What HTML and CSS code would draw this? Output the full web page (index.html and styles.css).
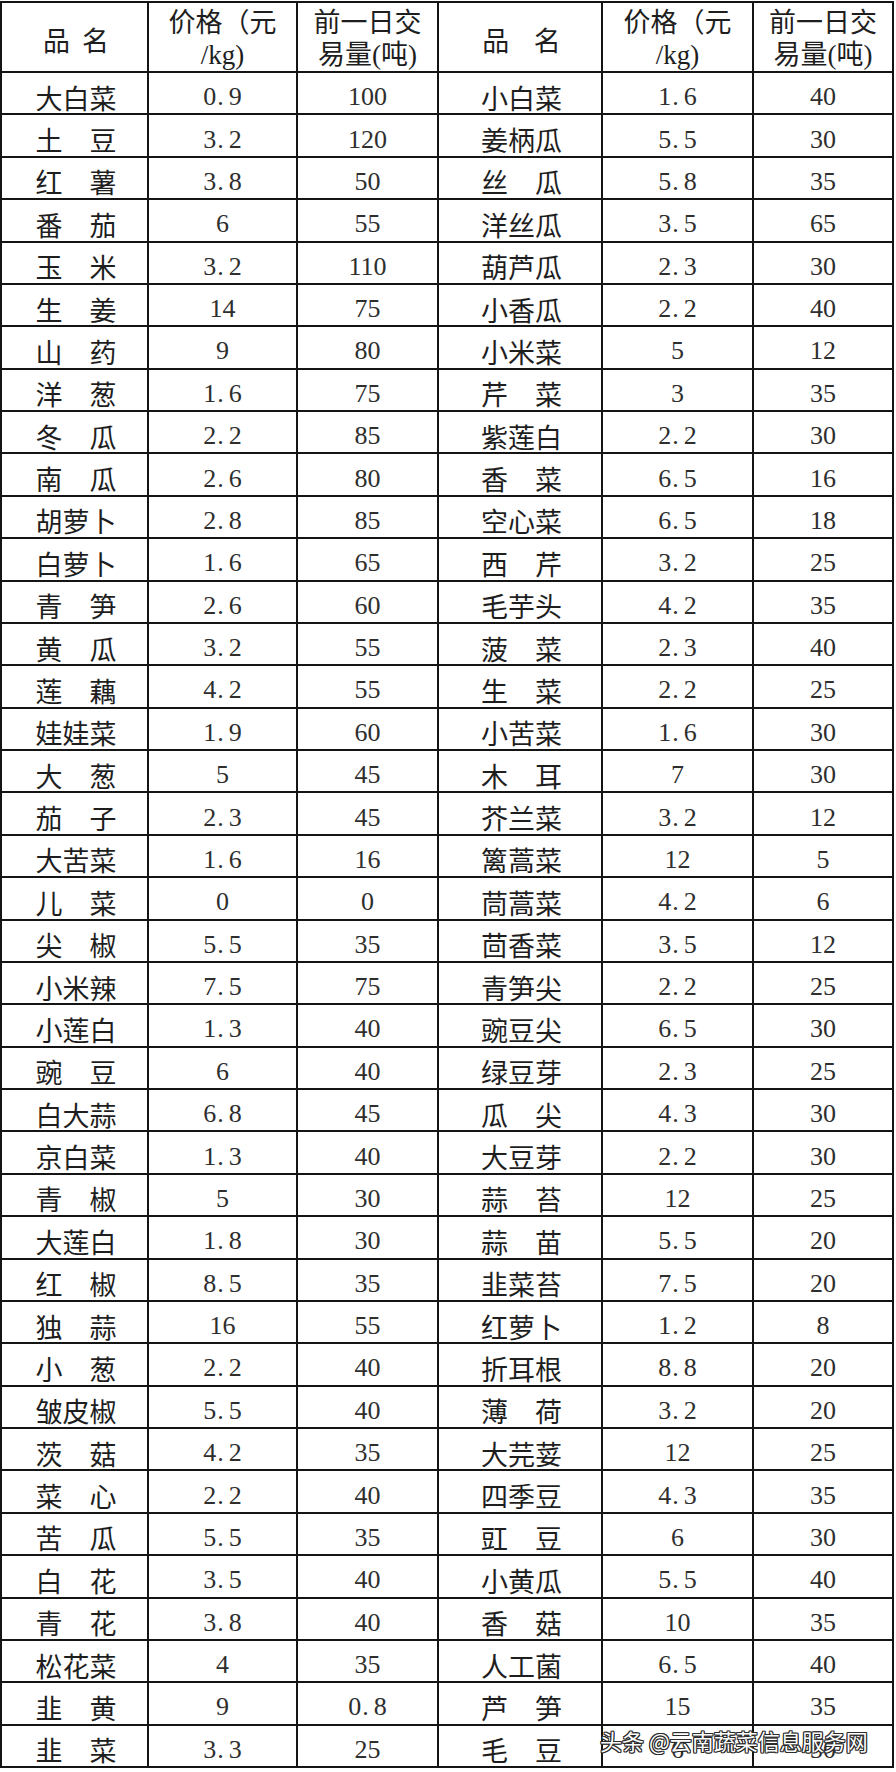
FILE: index.html
```html
<!DOCTYPE html>
<html lang="zh-CN">
<head>
<meta charset="utf-8">
<title>蔬菜价格表</title>
<link rel="stylesheet" href="styles.css">
</head>
<body>
<div class="sheet">
<table class="prices">
<colgroup>
<col class="c1"><col class="c2"><col class="c3"><col class="c4"><col class="c5"><col class="c6">
</colgroup>
<thead>
<tr>
<th class="name"><span class="jl">品名</span></th>
<th class="two">价格（元<br>/kg)</th>
<th class="two">前一日交<br>易量(吨)</th>
<th class="name"><span class="jr">品名</span></th>
<th class="two">价格（元<br>/kg)</th>
<th class="two">前一日交<br>易量(吨)</th>
</tr>
</thead>
<tbody>
<tr><td class="name">大白菜</td><td class="num">0<i class="pt">.</i>9</td><td class="num">100</td><td class="name">小白菜</td><td class="num">1<i class="pt">.</i>6</td><td class="num">40</td></tr>
<tr><td class="name"><span class="j">土豆</span></td><td class="num">3<i class="pt">.</i>2</td><td class="num">120</td><td class="name">姜柄瓜</td><td class="num">5<i class="pt">.</i>5</td><td class="num">30</td></tr>
<tr><td class="name"><span class="j">红薯</span></td><td class="num">3<i class="pt">.</i>8</td><td class="num">50</td><td class="name"><span class="j">丝瓜</span></td><td class="num">5<i class="pt">.</i>8</td><td class="num">35</td></tr>
<tr><td class="name"><span class="j">番茄</span></td><td class="num">6</td><td class="num">55</td><td class="name">洋丝瓜</td><td class="num">3<i class="pt">.</i>5</td><td class="num">65</td></tr>
<tr><td class="name"><span class="j">玉米</span></td><td class="num">3<i class="pt">.</i>2</td><td class="num">110</td><td class="name">葫芦瓜</td><td class="num">2<i class="pt">.</i>3</td><td class="num">30</td></tr>
<tr><td class="name"><span class="j">生姜</span></td><td class="num">14</td><td class="num">75</td><td class="name">小香瓜</td><td class="num">2<i class="pt">.</i>2</td><td class="num">40</td></tr>
<tr><td class="name"><span class="j">山药</span></td><td class="num">9</td><td class="num">80</td><td class="name">小米菜</td><td class="num">5</td><td class="num">12</td></tr>
<tr><td class="name"><span class="j">洋葱</span></td><td class="num">1<i class="pt">.</i>6</td><td class="num">75</td><td class="name"><span class="j">芹菜</span></td><td class="num">3</td><td class="num">35</td></tr>
<tr><td class="name"><span class="j">冬瓜</span></td><td class="num">2<i class="pt">.</i>2</td><td class="num">85</td><td class="name">紫莲白</td><td class="num">2<i class="pt">.</i>2</td><td class="num">30</td></tr>
<tr><td class="name"><span class="j">南瓜</span></td><td class="num">2<i class="pt">.</i>6</td><td class="num">80</td><td class="name"><span class="j">香菜</span></td><td class="num">6<i class="pt">.</i>5</td><td class="num">16</td></tr>
<tr><td class="name">胡萝卜</td><td class="num">2<i class="pt">.</i>8</td><td class="num">85</td><td class="name">空心菜</td><td class="num">6<i class="pt">.</i>5</td><td class="num">18</td></tr>
<tr><td class="name">白萝卜</td><td class="num">1<i class="pt">.</i>6</td><td class="num">65</td><td class="name"><span class="j">西芹</span></td><td class="num">3<i class="pt">.</i>2</td><td class="num">25</td></tr>
<tr><td class="name"><span class="j">青笋</span></td><td class="num">2<i class="pt">.</i>6</td><td class="num">60</td><td class="name">毛芋头</td><td class="num">4<i class="pt">.</i>2</td><td class="num">35</td></tr>
<tr><td class="name"><span class="j">黄瓜</span></td><td class="num">3<i class="pt">.</i>2</td><td class="num">55</td><td class="name"><span class="j">菠菜</span></td><td class="num">2<i class="pt">.</i>3</td><td class="num">40</td></tr>
<tr><td class="name"><span class="j">莲藕</span></td><td class="num">4<i class="pt">.</i>2</td><td class="num">55</td><td class="name"><span class="j">生菜</span></td><td class="num">2<i class="pt">.</i>2</td><td class="num">25</td></tr>
<tr><td class="name">娃娃菜</td><td class="num">1<i class="pt">.</i>9</td><td class="num">60</td><td class="name">小苦菜</td><td class="num">1<i class="pt">.</i>6</td><td class="num">30</td></tr>
<tr><td class="name"><span class="j">大葱</span></td><td class="num">5</td><td class="num">45</td><td class="name"><span class="j">木耳</span></td><td class="num">7</td><td class="num">30</td></tr>
<tr><td class="name"><span class="j">茄子</span></td><td class="num">2<i class="pt">.</i>3</td><td class="num">45</td><td class="name">芥兰菜</td><td class="num">3<i class="pt">.</i>2</td><td class="num">12</td></tr>
<tr><td class="name">大苦菜</td><td class="num">1<i class="pt">.</i>6</td><td class="num">16</td><td class="name">篱蒿菜</td><td class="num">12</td><td class="num">5</td></tr>
<tr><td class="name"><span class="j">儿菜</span></td><td class="num">0</td><td class="num">0</td><td class="name">茼蒿菜</td><td class="num">4<i class="pt">.</i>2</td><td class="num">6</td></tr>
<tr><td class="name"><span class="j">尖椒</span></td><td class="num">5<i class="pt">.</i>5</td><td class="num">35</td><td class="name">茴香菜</td><td class="num">3<i class="pt">.</i>5</td><td class="num">12</td></tr>
<tr><td class="name">小米辣</td><td class="num">7<i class="pt">.</i>5</td><td class="num">75</td><td class="name">青笋尖</td><td class="num">2<i class="pt">.</i>2</td><td class="num">25</td></tr>
<tr><td class="name">小莲白</td><td class="num">1<i class="pt">.</i>3</td><td class="num">40</td><td class="name">豌豆尖</td><td class="num">6<i class="pt">.</i>5</td><td class="num">30</td></tr>
<tr><td class="name"><span class="j">豌豆</span></td><td class="num">6</td><td class="num">40</td><td class="name">绿豆芽</td><td class="num">2<i class="pt">.</i>3</td><td class="num">25</td></tr>
<tr><td class="name">白大蒜</td><td class="num">6<i class="pt">.</i>8</td><td class="num">45</td><td class="name"><span class="j">瓜尖</span></td><td class="num">4<i class="pt">.</i>3</td><td class="num">30</td></tr>
<tr><td class="name">京白菜</td><td class="num">1<i class="pt">.</i>3</td><td class="num">40</td><td class="name">大豆芽</td><td class="num">2<i class="pt">.</i>2</td><td class="num">30</td></tr>
<tr><td class="name"><span class="j">青椒</span></td><td class="num">5</td><td class="num">30</td><td class="name"><span class="j">蒜苔</span></td><td class="num">12</td><td class="num">25</td></tr>
<tr><td class="name">大莲白</td><td class="num">1<i class="pt">.</i>8</td><td class="num">30</td><td class="name"><span class="j">蒜苗</span></td><td class="num">5<i class="pt">.</i>5</td><td class="num">20</td></tr>
<tr><td class="name"><span class="j">红椒</span></td><td class="num">8<i class="pt">.</i>5</td><td class="num">35</td><td class="name">韭菜苔</td><td class="num">7<i class="pt">.</i>5</td><td class="num">20</td></tr>
<tr><td class="name"><span class="j">独蒜</span></td><td class="num">16</td><td class="num">55</td><td class="name">红萝卜</td><td class="num">1<i class="pt">.</i>2</td><td class="num">8</td></tr>
<tr><td class="name"><span class="j">小葱</span></td><td class="num">2<i class="pt">.</i>2</td><td class="num">40</td><td class="name">折耳根</td><td class="num">8<i class="pt">.</i>8</td><td class="num">20</td></tr>
<tr><td class="name">皱皮椒</td><td class="num">5<i class="pt">.</i>5</td><td class="num">40</td><td class="name"><span class="j">薄荷</span></td><td class="num">3<i class="pt">.</i>2</td><td class="num">20</td></tr>
<tr><td class="name"><span class="j">茨菇</span></td><td class="num">4<i class="pt">.</i>2</td><td class="num">35</td><td class="name">大芫荽</td><td class="num">12</td><td class="num">25</td></tr>
<tr><td class="name"><span class="j">菜心</span></td><td class="num">2<i class="pt">.</i>2</td><td class="num">40</td><td class="name">四季豆</td><td class="num">4<i class="pt">.</i>3</td><td class="num">35</td></tr>
<tr><td class="name"><span class="j">苦瓜</span></td><td class="num">5<i class="pt">.</i>5</td><td class="num">35</td><td class="name"><span class="j">豇豆</span></td><td class="num">6</td><td class="num">30</td></tr>
<tr><td class="name"><span class="j">白花</span></td><td class="num">3<i class="pt">.</i>5</td><td class="num">40</td><td class="name">小黄瓜</td><td class="num">5<i class="pt">.</i>5</td><td class="num">40</td></tr>
<tr><td class="name"><span class="j">青花</span></td><td class="num">3<i class="pt">.</i>8</td><td class="num">40</td><td class="name"><span class="j">香菇</span></td><td class="num">10</td><td class="num">35</td></tr>
<tr><td class="name">松花菜</td><td class="num">4</td><td class="num">35</td><td class="name">人工菌</td><td class="num">6<i class="pt">.</i>5</td><td class="num">40</td></tr>
<tr><td class="name"><span class="j">韭黄</span></td><td class="num">9</td><td class="num">0<i class="pt">.</i>8</td><td class="name"><span class="j">芦笋</span></td><td class="num">15</td><td class="num">35</td></tr>
<tr><td class="name"><span class="j">韭菜</span></td><td class="num">3<i class="pt">.</i>3</td><td class="num">25</td><td class="name"><span class="j">毛豆</span></td><td class="num">6</td><td class="num">30</td></tr>
</tbody>
</table>
<div class="watermark">头条 @云南蔬菜信息服务网</div>
</div>
</body>
</html>
```

FILE: styles.css
```css
html, body {
  margin: 0;
  padding: 0;
  background: #ffffff;
}

.sheet {
  position: relative;
  width: 896px;
  padding-top: 1px;
}

.prices {
  table-layout: fixed;
  width: 894px;
  border-collapse: separate;
  border-spacing: 2px;
  background: #141414;
  color: #1e1e1e;
}

.c1 { width: 145px; }
.c2 { width: 147px; }
.c3 { width: 139px; }
.c4 { width: 162px; }
.c5 { width: 149px; }
.c6 { width: 138px; }

.prices th,
.prices td {
  background: #ffffff;
  padding: 0;
  text-align: center;
  vertical-align: middle;
  box-sizing: border-box;
  font-weight: normal;
  white-space: nowrap;
}

.prices th {
  height: 68px;
  padding-top: 5px;
  font-family: "Liberation Serif", "Noto Sans CJK SC", serif;
  font-size: 27px;
  line-height: 31.5px;
}

.prices td {
  height: 40.375px;
  padding-top: 9px;
  line-height: 30px;
}

.prices .name {
  font-family: "Noto Sans CJK SC", sans-serif;
  font-size: 27px;
  padding-left: 3px;
}

.prices .num {
  font-family: "Liberation Serif", "Times New Roman", serif;
  font-size: 26px;
  color: #2e2e2e;
  padding-top: 8px;
}

.pt {
  font-style: normal;
  margin-left: 1px;
  margin-right: 5px;
}

.j,
.jl,
.jr {
  display: inline-block;
  text-align: justify;
  text-align-last: justify;
}

.j { width: 3em; }
.jl { width: 2.45em; }
.jr { width: 2.9em; }

.watermark {
  position: absolute;
  left: 600px;
  top: 1729px;
  font-family: "Noto Sans CJK SC", sans-serif;
  font-size: 22px;
  line-height: 22px;
  color: #ffffff;
  white-space: nowrap;
  text-shadow:
    1px 0 0 #2b2b2b,
    -1px 0 0 #2b2b2b,
    0 1px 0 #2b2b2b,
    0 -1px 0 #2b2b2b,
    1px 1px 0 #2b2b2b,
    -1px -1px 0 #2b2b2b,
    1px -1px 0 #2b2b2b,
    -1px 1px 0 #2b2b2b;
}
```
